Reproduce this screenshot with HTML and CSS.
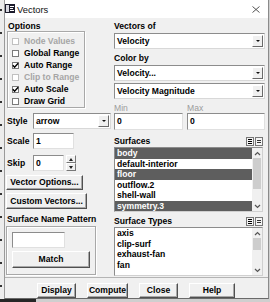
FILE: index.html
```html
<!DOCTYPE html>
<html lang="en">
<head>
  <meta charset="UTF-8" />
  <title>Vectors</title>
  <link rel="stylesheet" href="styles.css">
</head>
<body>
  <div class="screen">
    <div class="behind"></div>

    <div class="window">
      <div class="titlebar">
        <svg class="app-icon" width="10" height="9" viewBox="0 0 10 9">
          <rect x="0" y="0" width="10" height="9" fill="#1c1c2c"/>
          <rect x="1" y="1" width="3" height="7" fill="#d8d8e0"/>
          <rect x="5" y="2" width="4" height="1" fill="#fff"/>
          <rect x="5" y="4" width="3" height="1" fill="#fff"/>
          <rect x="5" y="6" width="4" height="1" fill="#fff"/>
        </svg>
        <span class="title">Vectors</span>
        <svg class="close" width="8" height="7" viewBox="0 0 8 7">
          <path d="M0.5 0.5 L7.5 6.5 M7.5 0.5 L0.5 6.5" stroke="#444" stroke-width="0.9" fill="none"/>
        </svg>
      </div>

      <div class="panel">
        <!-- left column -->
        <div class="col-left">
          <div class="label">Options</div>
          <div class="group options">
            <div class="check disabled"><span class="box"></span>Node Values</div>
            <div class="check"><span class="box"></span>Global Range</div>
            <div class="check"><span class="box"><svg width="7" height="7" viewBox="0 0 7 7"><path d="M0.8 3.2 L2.6 5.2 L6.2 1.2" stroke="#000" stroke-width="1.4" fill="none"/></svg></span>Auto Range</div>
            <div class="check disabled"><span class="box"></span>Clip to Range</div>
            <div class="check"><span class="box"><svg width="7" height="7" viewBox="0 0 7 7"><path d="M0.8 3.2 L2.6 5.2 L6.2 1.2" stroke="#000" stroke-width="1.4" fill="none"/></svg></span>Auto Scale</div>
            <div class="check"><span class="box"></span>Draw Grid</div>
          </div>

          <div class="field-row style-row">
            <span class="field-label">Style</span>
            <div class="select style-select"><span class="value">arrow</span><span class="drop"></span></div>
          </div>
          <div class="field-row scale-row">
            <span class="field-label">Scale</span>
            <div class="input scale-input">1</div>
          </div>
          <div class="field-row skip-row">
            <span class="field-label">Skip</span>
            <div class="input skip-input">0</div>
            <div class="spinner">
              <span class="spin up"></span>
              <span class="spin down"></span>
            </div>
          </div>

          <div class="btn vec-options">Vector Options...</div>
          <div class="btn custom-vectors">Custom Vectors...</div>

          <div class="label pattern-label">Surface Name Pattern</div>
          <div class="group pattern">
            <div class="input pattern-input"></div>
            <div class="btn match">Match</div>
          </div>
        </div>

        <!-- right column -->
        <div class="col-right">
          <div class="label">Vectors of</div>
          <div class="select wide first"><span class="value">Velocity</span><span class="drop"></span></div>

          <div class="label colorby">Color by</div>
          <div class="select wide first"><span class="value">Velocity...</span><span class="drop"></span></div>
          <div class="select wide second"><span class="value">Velocity Magnitude</span><span class="drop"></span></div>

          <div class="minmax-labels">
            <span class="muted">Min</span>
            <span class="muted">Max</span>
          </div>
          <div class="minmax">
            <div class="input">0</div>
            <div class="input">0</div>
          </div>

          <div class="list-head surfaces-head">
            <span>Surfaces</span>
            <span class="head-icons">
              <svg width="8" height="9" viewBox="0 0 8 9"><rect x="0.5" y="0.5" width="7" height="8" fill="#f4f4f4" stroke="#777"/><rect x="2" y="2" width="4" height="1" fill="#000"/><rect x="2" y="4" width="4" height="1" fill="#000"/><rect x="2" y="6" width="4" height="1" fill="#000"/></svg>
              <svg width="8" height="9" viewBox="0 0 8 9"><rect x="0.5" y="0.5" width="7" height="8" fill="#f4f4f4" stroke="#777"/><rect x="2" y="3" width="4" height="1" fill="#333"/><rect x="2" y="5" width="4" height="1" fill="#333"/></svg>
            </span>
          </div>
          <div class="list surfaces">
            <div class="rows">
              <div class="row sel">body</div>
              <div class="row">default-interior</div>
              <div class="row sel">floor</div>
              <div class="row">outflow.2</div>
              <div class="row">shell-wall</div>
              <div class="row sel">symmetry.3</div>
            </div>
            <div class="scrollbar">
              <span class="arrow"><svg width="7" height="5" viewBox="0 0 7 5"><path d="M1 4 L3.5 1.5 L6 4" stroke="#555" stroke-width="1.2" fill="none"/></svg></span>
              <span class="thumb surfaces-thumb"></span>
              <span class="track"></span>
              <span class="arrow"><svg width="7" height="5" viewBox="0 0 7 5"><path d="M1 1 L3.5 3.5 L6 1" stroke="#555" stroke-width="1.2" fill="none"/></svg></span>
            </div>
          </div>

          <div class="list-head types-head">
            <span>Surface Types</span>
            <span class="head-icons">
              <svg width="8" height="9" viewBox="0 0 8 9"><rect x="0.5" y="0.5" width="7" height="8" fill="#f4f4f4" stroke="#777"/><rect x="2" y="2" width="4" height="1" fill="#000"/><rect x="2" y="4" width="4" height="1" fill="#000"/><rect x="2" y="6" width="4" height="1" fill="#000"/></svg>
              <svg width="8" height="9" viewBox="0 0 8 9"><rect x="0.5" y="0.5" width="7" height="8" fill="#f4f4f4" stroke="#777"/><rect x="2" y="3" width="4" height="1" fill="#333"/><rect x="2" y="5" width="4" height="1" fill="#333"/></svg>
            </span>
          </div>
          <div class="list types">
            <div class="rows">
              <div class="row">axis</div>
              <div class="row">clip-surf</div>
              <div class="row">exhaust-fan</div>
              <div class="row">fan</div>
            </div>
            <div class="scrollbar">
              <span class="arrow"><svg width="7" height="5" viewBox="0 0 7 5"><path d="M1 4 L3.5 1.5 L6 4" stroke="#555" stroke-width="1.2" fill="none"/></svg></span>
              <span class="thumb types-thumb"></span>
              <span class="track"></span>
              <span class="arrow"><svg width="7" height="5" viewBox="0 0 7 5"><path d="M1 1 L3.5 3.5 L6 1" stroke="#555" stroke-width="1.2" fill="none"/></svg></span>
            </div>
          </div>
        </div>
      </div>

      <div class="actions">
        <div class="btn act">Display</div>
        <div class="btn act compute">Compute</div>
        <div class="btn act">Close</div>
        <div class="btn act help">Help</div>
      </div>
    </div>
  </div>
</body>
</html>
```

FILE: styles.css
```css
html, body {
  margin: 0;
  width: 270px;
  height: 302px;
  overflow: hidden;
}
body {
  font-family: "Liberation Sans", Arial, sans-serif;
  font-size: 8.6px;
  font-weight: bold;
  color: #000;
}
.screen {
  display: flex;
  align-items: flex-start;
  width: 270px;
  height: 302px;
  overflow: hidden;
  background: linear-gradient(to right, #262626 0 36px, #cfcfcf 36px);
}
.behind {
  width: 4px;
  height: 299px;
  flex-shrink: 0;
  background:
    repeating-linear-gradient(to bottom, transparent 0 9px, #333 9px 11px, transparent 11px 23px) left / 2px 100% no-repeat,
    #ececec;
}
.window {
  width: 265px;
  height: 299px;
  box-sizing: border-box;
  flex-shrink: 0;
  overflow: hidden;
  background: #f0f0f0;
  border-left: 1px solid #9a9a9a;
  border-right: 1px solid #8a8a8a;
  border-bottom: 1px solid #6a6a6a;
  display: flex;
  flex-direction: column;
}

/* title bar */
.titlebar {
  height: 18px;
  flex-shrink: 0;
  background: #fff;
  display: flex;
  align-items: center;
}
.app-icon {
  margin: 0 2px 1px 0;
}
.title {
  font-weight: normal;
  font-size: 9.4px;
  color: #111;
}
.close {
  margin-left: auto;
  margin-right: 8px;
}

/* body */
.panel {
  display: flex;
  align-items: flex-start;
  gap: 4px;
  height: 259px;
  flex-shrink: 0;
  padding: 0 3px 0 1px;
}
.col-left {
  width: 104px;
  display: flex;
  flex-direction: column;
  align-items: flex-start;
  padding-top: 3px;
}
.col-right {
  width: 151px;
  display: flex;
  flex-direction: column;
  padding-top: 3px;
}
.col-left > *, .col-right > * {
  flex-shrink: 0;
}
.label {
  line-height: 10px;
  height: 10px;
  padding-left: 2px;
  white-space: nowrap;
}
.col-right .label {
  padding-left: 0;
}

.group {
  border: 1px solid #a8a8a8;
  box-shadow: inset 1px 1px #fff, 1px 1px #fff;
  box-sizing: border-box;
}
.options {
  width: 78px;
  height: 77px;
  margin-left: 1px;
  padding-top: 3px;
}
.check {
  height: 12px;
  display: flex;
  align-items: center;
  gap: 5px;
  padding-left: 4px;
  white-space: nowrap;
}
.check .box {
  width: 7px;
  height: 7px;
  box-sizing: border-box;
  background: #fff;
  border: 1px solid #7a7a7a;
  display: flex;
  align-items: center;
  justify-content: center;
}
.check .box svg {
  flex-shrink: 0;
}
.check.disabled {
  color: #a6a6a6;
}
.check.disabled .box {
  border-color: #c0c0c0;
}

.field-row {
  display: flex;
  align-items: center;
  height: 16px;
}
.field-label {
  width: 26px;
  padding-left: 1px;
}
.style-row { margin-top: 5px; }
.scale-row { margin-top: 4px; }
.skip-row  { margin-top: 6px; }

.input {
  height: 16px;
  box-sizing: border-box;
  background: #fff;
  border: 1px solid #8c8c8c;
  border-right-color: #e0e0e0;
  border-bottom-color: #e0e0e0;
  line-height: 14px;
  padding-left: 2px;
}
.scale-input { width: 41px; }
.skip-input  { width: 31px; }

.spinner {
  display: flex;
  flex-direction: column;
  margin-left: 2px;
  height: 16px;
}
.spin {
  width: 10px;
  height: 8px;
  box-sizing: border-box;
  background: #f0f0f0;
  border: 1px solid;
  border-color: #fff #777 #777 #fff;
  display: flex;
  align-items: center;
  justify-content: center;
}
.spin::after {
  content: "";
  border-left: 2px solid transparent;
  border-right: 2px solid transparent;
}
.spin.up::after   { border-bottom: 3px solid #222; }
.spin.down::after { border-top: 3px solid #222; }

.select {
  height: 16px;
  box-sizing: border-box;
  background: #fff;
  border: 1px solid #8c8c8c;
  border-right-color: #d8d8d8;
  border-bottom-color: #d8d8d8;
  display: flex;
  align-items: center;
}
.select .value {
  flex: 1;
  padding-left: 2px;
  white-space: nowrap;
}
.select .drop {
  width: 11px;
  height: 12px;
  margin-right: 1px;
  box-sizing: border-box;
  background: #f0f0f0;
  border: 1px solid;
  border-color: #fff #6a6a6a #6a6a6a #fff;
  display: flex;
  align-items: center;
  justify-content: center;
}
.select .drop::after {
  content: "";
  border-left: 2px solid transparent;
  border-right: 2px solid transparent;
  border-top: 2px solid #111;
}
.style-select { width: 78px; }
.wide.first  { margin-top: 2px; }
.wide.second { margin-top: 2px; }
.colorby { margin-top: 4px; }

.btn {
  box-sizing: border-box;
  background: #f0f0f0;
  border: 1px solid;
  border-color: #fff #505050 #505050 #fff;
  box-shadow: inset -1px -1px #a8a8a8;
  height: 15px;
  line-height: 13px;
  text-align: center;
  white-space: nowrap;
  cursor: pointer;
}
.vec-options    { margin-top: 4px; width: 77px; }
.custom-vectors { margin-top: 3px; width: 81px; height: 16px; line-height: 14px; }
.pattern-label  { margin-top: 5px; padding-left: 1px; }
.pattern {
  width: 90px;
  height: 49px;
  margin-top: 2px;
  padding: 5px 0 0 5px;
}
.pattern-input { width: 53px; }
.match {
  margin-top: 3px;
  width: 78px;
  height: 17px;
  line-height: 15px;
}

/* right column */
.minmax-labels {
  margin-top: 4px;
  display: grid;
  grid-template-columns: 69px 78px;
  gap: 4px;
  height: 10px;
  line-height: 10px;
}
.muted {
  color: #9c9c9c;
  font-weight: normal;
}
.minmax {
  display: grid;
  grid-template-columns: 69px 78px;
  gap: 4px;
}
.minmax .input {
  height: 17px;
  line-height: 15px;
}

.list-head {
  display: flex;
  align-items: center;
  justify-content: space-between;
  height: 10px;
  line-height: 10px;
  padding-right: 2px;
}
.surfaces-head { margin-top: 6px; }
.types-head    { margin-top: 4px; }
.head-icons {
  display: flex;
  gap: 1px;
}

.list {
  width: 149px;
  box-sizing: border-box;
  margin-top: 1px;
  background: #fff;
  border: 1px solid #8c8c8c;
  border-right-color: #d0d0d0;
  border-bottom-color: #d0d0d0;
  display: flex;
}
.surfaces { height: 65px; }
.types    { height: 49px; }
.rows {
  flex: 1;
}
.row {
  height: 10.5px;
  line-height: 10.5px;
  padding-left: 2px;
  white-space: nowrap;
}
.row.sel {
  background: #5e5e5e;
  color: #fff;
}
.scrollbar {
  width: 10px;
  background: #f0f0f0;
  display: flex;
  flex-direction: column;
}
.scrollbar .arrow {
  height: 10px;
  display: flex;
  align-items: center;
  justify-content: center;
}
.scrollbar .thumb {
  background: #cdcdcd;
  margin: 0 1px;
}
.surfaces-thumb { height: 31px; }
.types-thumb    { height: 12px; }
.scrollbar .track {
  flex: 1;
}

/* bottom buttons */
.actions {
  flex-shrink: 0;
  border-top: 1px solid #b4b4b4;
  padding: 5px 0 0 32px;
  display: flex;
  gap: 11px;
}
.act { width: 39px; }
.compute { width: 41px; }
.help    { width: 46px; }
```
